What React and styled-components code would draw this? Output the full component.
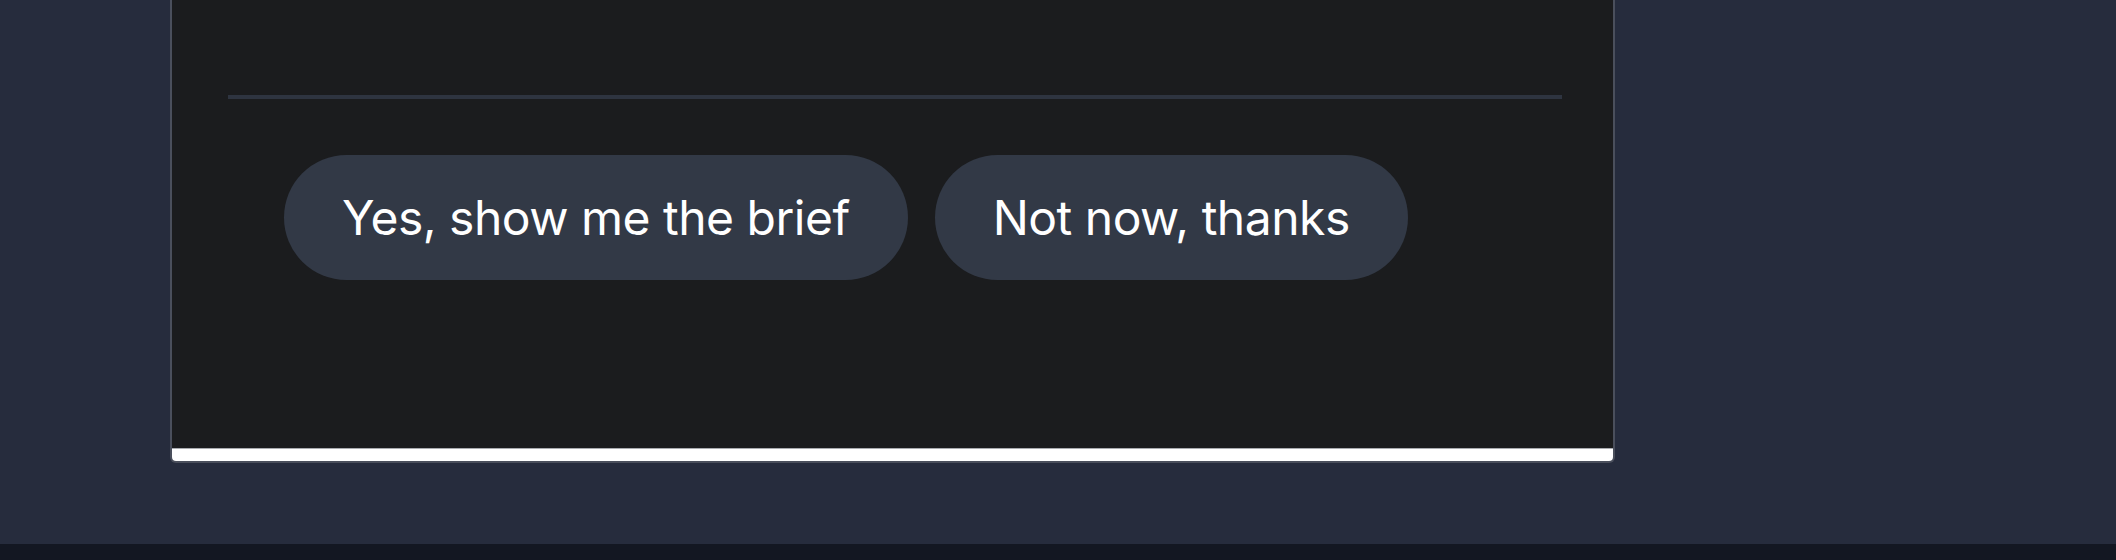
import React from "react";
import styled, { createGlobalStyle } from "styled-components";

const Global = createGlobalStyle`
  *, *::before, *::after {
    box-sizing: border-box;
  }
  html, body {
    margin: 0;
    padding: 0;
    background: #262c3d;
  }
  body {
    font-family: Inter, "Noto Sans", "Liberation Sans", sans-serif;
  }
`;

const Page = styled.div`
  display: flex;
  flex-direction: column;
  width: 100%;
  height: 560px;
  background: #262c3d;
`;

const Stage = styled.div`
  flex: 1;
  display: flex;
  align-items: flex-start;
  padding-left: 170px;
`;

const Card = styled.div`
  width: 1445px;
  display: flex;
  flex-direction: column;
  border: 2px solid #4a4f5c;
  border-top: none;
  border-radius: 0 0 6px 6px;
  overflow: hidden;
`;

const Body = styled.div`
  background: #1b1c1e;
  padding: 95px 51px 168px 56px;
`;

const Divider = styled.hr`
  margin: 0;
  border: none;
  height: 4px;
  background: #2e3440;
`;

const Actions = styled.div`
  display: flex;
  gap: 27px;
  margin-top: 56px;
  padding-left: 56px;
`;

const Choice = styled.button`
  height: 125px;
  padding: 0 58px;
  display: flex;
  align-items: center;
  justify-content: center;
  border: none;
  border-radius: 63px;
  background: #323946;
  color: #ffffff;
  font-family: Inter, "Noto Sans", "Liberation Sans", sans-serif;
  font-size: 48px;
  font-weight: 400;
  letter-spacing: -0.5px;
  white-space: nowrap;
  cursor: pointer;
`;

const Strip = styled.div`
  height: 13px;
  background: #ffffff;
  border-top: 1px solid #a9abb0;
`;

const BottomBand = styled.div`
  height: 16px;
  background: #131722;
`;

export default function App() {
  return (
    <Page>
      <Global />
      <Stage>
        <Card>
          <Body>
            <Divider />
            <Actions>
              <Choice>Yes, show me the brief</Choice>
              <Choice>Not now, thanks</Choice>
            </Actions>
          </Body>
          <Strip />
        </Card>
      </Stage>
      <BottomBand />
    </Page>
  );
}
